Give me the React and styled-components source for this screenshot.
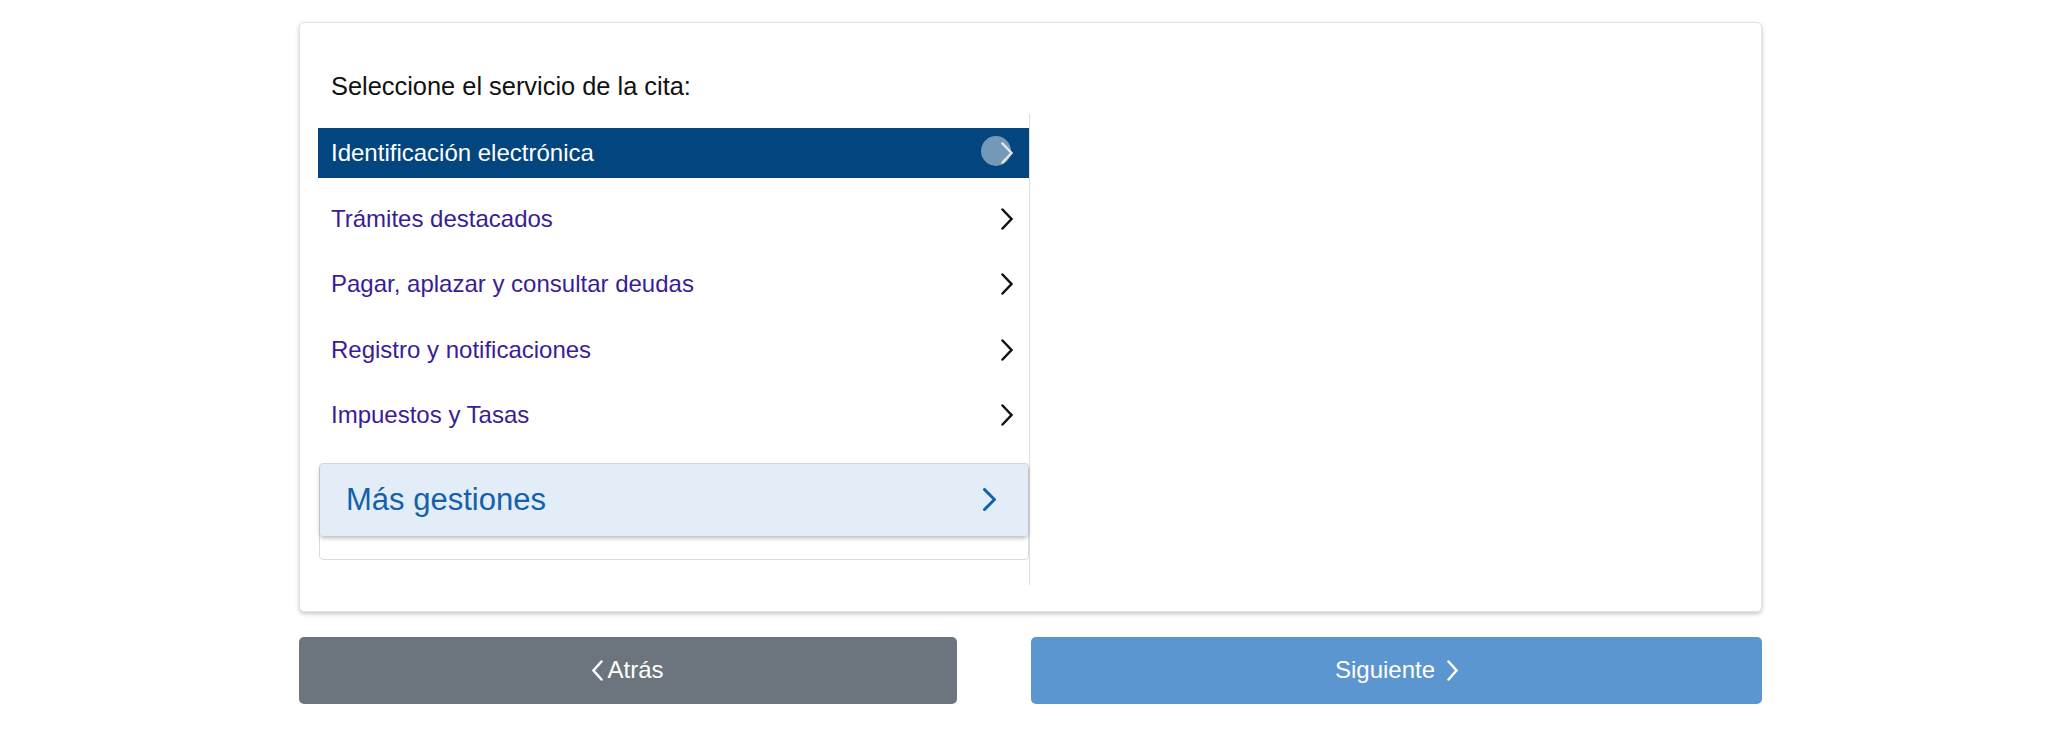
import React from "react";
import styled, { createGlobalStyle } from "styled-components";

const GlobalStyle = createGlobalStyle`
  body {
    margin: 0;
    background: #ffffff;
    font-family: "Liberation Sans", Arial, Helvetica, sans-serif;
  }
`;

const Page = styled.div`
  width: 1463px;
  padding: 22px 0 20px 299px;
`;

const Card = styled.section`
  border: 1px solid #e2e2e2;
  border-radius: 5px;
  box-shadow: 0 2px 4px rgba(0, 0, 0, 0.22);
  padding: 49px 18px 26px;
  background: #fff;
`;

const Heading = styled.h2`
  margin: 0 0 13px;
  padding-left: 13px;
  font-size: 25.4px;
  line-height: 29px;
  font-weight: 400;
  color: #111;
`;

const Columns = styled.div`
  display: flex;
`;

const ListColumn = styled.div`
  width: 711px;
  border-right: 1px solid #dedede;
  padding: 14px 0 25px;
`;

const Row = styled.div`
  position: relative;
  height: 50px;
  display: flex;
  align-items: center;
  justify-content: space-between;
  padding: 0 16px 0 13px;
  margin-bottom: ${(p) => (p.$last ? "22.6px" : "15.6px")};
  background: ${(p) => (p.$selected ? "#03457f" : "transparent")};
  color: ${(p) => (p.$selected ? "#ffffff" : "#3a1d96")};
  font-size: 24px;
  cursor: pointer;
`;

const ChevronWrap = styled.span`
  position: relative;
  display: flex;
  width: 12px;
  height: 22px;
`;

const Ripple = styled.span`
  position: absolute;
  left: -20px;
  top: -6px;
  width: 30px;
  height: 30px;
  border-radius: 50%;
  background: rgba(255, 255, 255, 0.45);
`;

const MoreWrap = styled.div`
  margin-left: 1px;
  border: 1px solid #dcdcdc;
  border-radius: 4px;
  padding-bottom: 23px;
`;

const MoreBox = styled.div`
  height: 72px;
  display: flex;
  align-items: center;
  justify-content: space-between;
  padding: 0 32px 0 26px;
  background: #e3edf8;
  border-radius: 4px;
  box-shadow: 0 2px 4px rgba(0, 0, 0, 0.28);
  color: #1560ad;
  font-size: 31px;
`;

const Buttons = styled.div`
  display: flex;
  justify-content: space-between;
  margin-top: 25px;
`;

const Button = styled.button`
  height: 67px;
  width: ${(p) => p.$w}px;
  border: none;
  border-radius: 5px;
  background: ${(p) => p.$bg};
  color: #ffffff;
  font-family: "Liberation Sans", Arial, Helvetica, sans-serif;
  font-size: 24px;
  display: flex;
  align-items: center;
  justify-content: center;
  gap: ${(p) => p.$gap}px;
  cursor: pointer;
`;

const Chevron = ({ color = "#111", w = 12, h = 22, sw = 2.5, left = false }) => (
  <svg width={w} height={h} viewBox={`0 0 ${w} ${h}`} style={{ display: "block", position: "relative" }}>
    <polyline
      points={
        left
          ? `${w - 1.5},1.5 1.5,${h / 2} ${w - 1.5},${h - 1.5}`
          : `1.5,1.5 ${w - 1.5},${h / 2} 1.5,${h - 1.5}`
      }
      fill="none"
      stroke={color}
      strokeWidth={sw}
      strokeLinecap="round"
      strokeLinejoin="miter"
    />
  </svg>
);

const items = [
  "Identificación electrónica",
  "Trámites destacados",
  "Pagar, aplazar y consultar deudas",
  "Registro y notificaciones",
  "Impuestos y Tasas",
];

export default function App() {
  return (
    <>
      <GlobalStyle />
      <Page>
        <Card>
          <Heading>Seleccione el servicio de la cita:</Heading>
          <Columns>
            <ListColumn>
              {items.map((label, i) => (
                <Row key={label} $selected={i === 0} $last={i === items.length - 1}>
                  <span>{label}</span>
                  <ChevronWrap>
                    {i === 0 && <Ripple />}
                    <Chevron color={i === 0 ? "#e6e6e6" : "#111"} />
                  </ChevronWrap>
                </Row>
              ))}
              <MoreWrap>
                <MoreBox>
                  <span>Más gestiones</span>
                  <Chevron color="#1560ad" w={13} h={23} sw={3} />
                </MoreBox>
              </MoreWrap>
            </ListColumn>
          </Columns>
        </Card>
        <Buttons>
          <Button $w={658} $bg="#6c757d" $gap={4}>
            <Chevron color="#ffffff" w={11} h={21} sw={2.5} left />
            Atrás
          </Button>
          <Button $w={731} $bg="#5b96d0" $gap={12}>
            Siguiente
            <Chevron color="#ffffff" w={11} h={21} sw={2.5} />
          </Button>
        </Buttons>
      </Page>
    </>
  );
}
